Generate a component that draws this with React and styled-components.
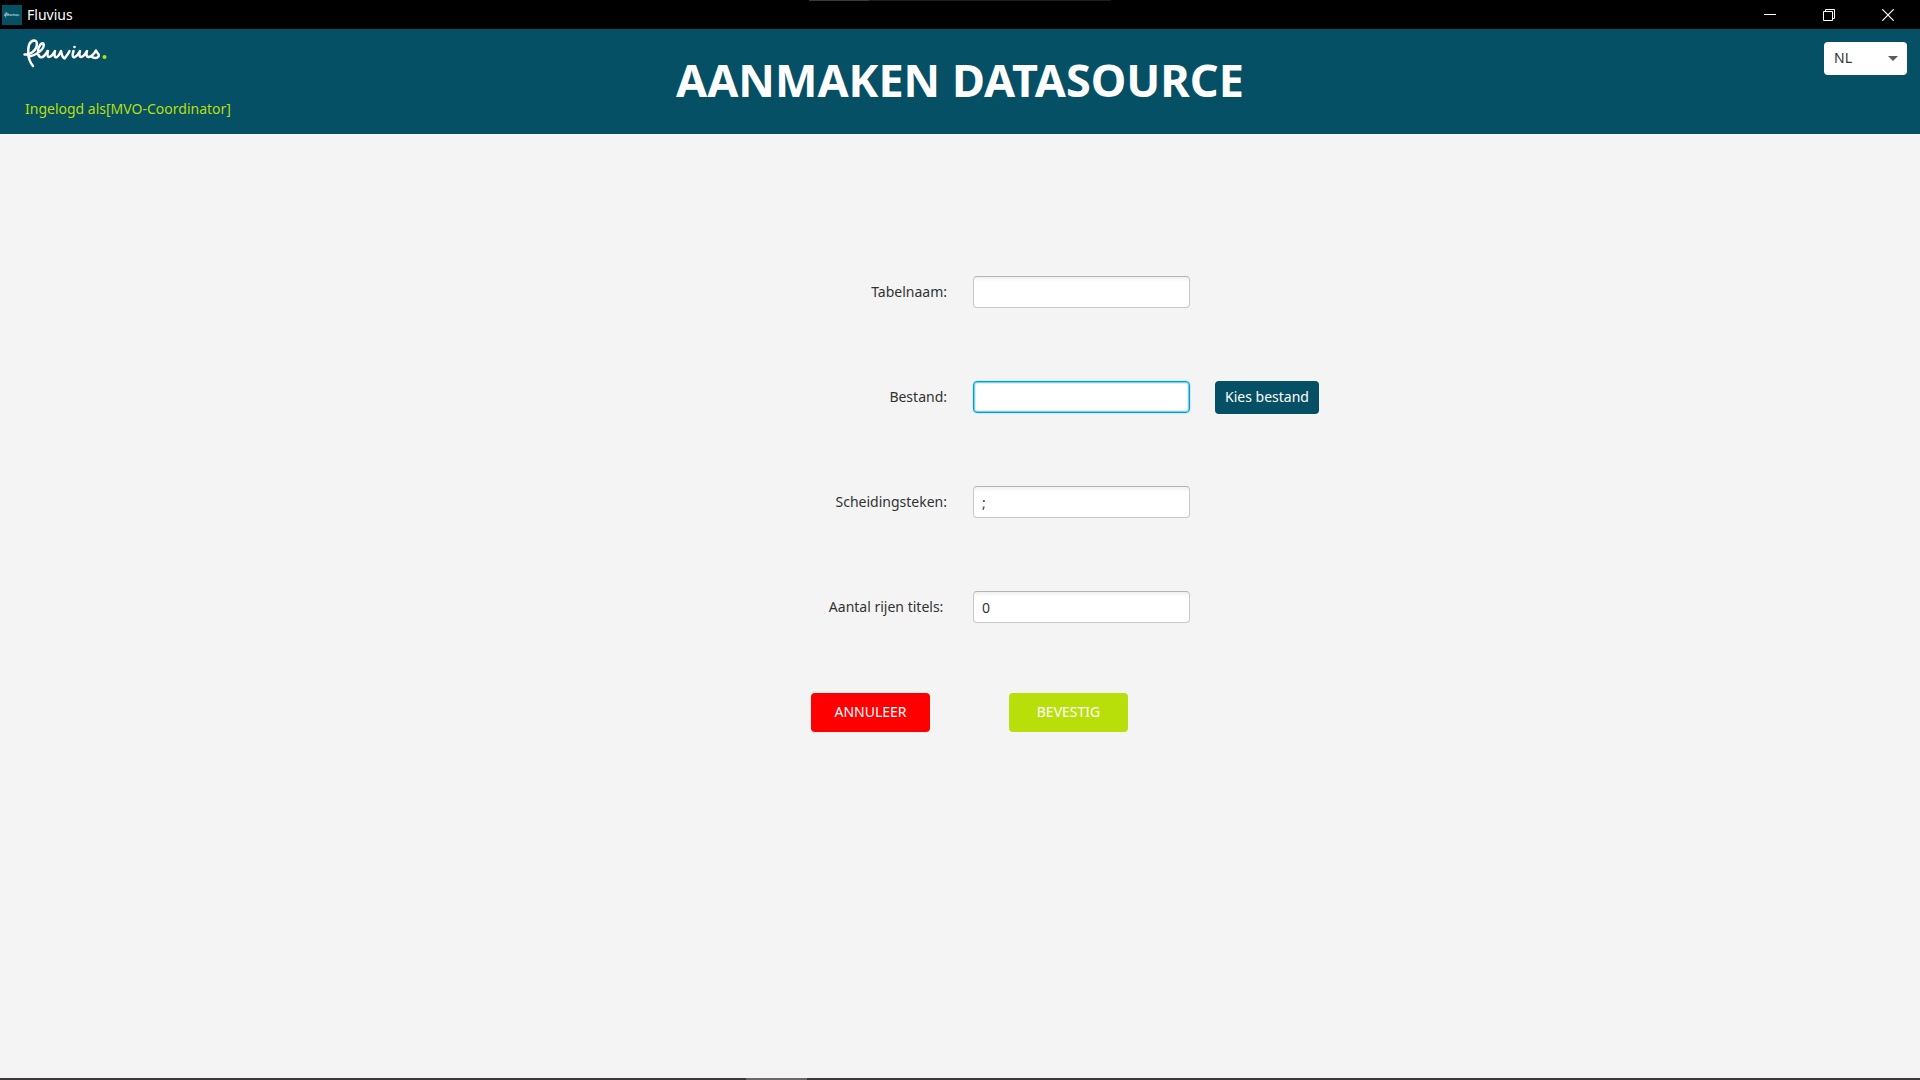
import React, { useState } from "react";
import styled, { createGlobalStyle, css } from "styled-components";

const teal = "#055064";
const lime = "#b9df0b";

const GlobalStyle = createGlobalStyle`
  *, *::before, *::after { box-sizing: border-box; }
  body {
    margin: 0;
    background: #f4f4f4;
    color: #323232;
    font: 14px/20px "Noto Sans", "Open Sans", sans-serif;
  }
  button, input, select { font: inherit; color: inherit; }
`;

const Window = styled.div`
  display: flex;
  flex-direction: column;
  min-height: 100vh;
`;

const TitleBar = styled.div`
  position: relative;
  display: flex;
  align-items: center;
  justify-content: space-between;
  height: 29px;
  padding: 0 3px 0 2px;
  background: #000;
  color: #fff;
`;

const TopSliver = styled.div`
  position: absolute;
  top: 0;
  left: 50%;
  width: 302px;
  height: 1px;
  margin-left: -151px;
  background: linear-gradient(to right, #3c3c3c 60px, #1e1e1e 60px);
`;

const AppName = styled.div`
  display: flex;
  align-items: center;
  gap: 5px;
`;

const AppIcon = styled.span`
  display: flex;
  align-items: center;
  justify-content: center;
  width: 20px;
  height: 20px;
  background: ${teal};
`;

const WindowControls = styled.div`
  display: flex;
`;

const ControlButton = styled.button`
  display: flex;
  align-items: center;
  justify-content: center;
  width: 59px;
  height: 28px;
  padding: 0;
  border: 0;
  background: transparent;
`;

const Header = styled.header`
  display: grid;
  grid-template-columns: 1fr auto 1fr;
  height: 105px;
  padding: 0 13px;
  background: ${teal};
`;

const Brand = styled.div`
  display: flex;
  flex-direction: column;
  justify-content: space-between;
  align-items: flex-start;
  padding: 10px 0 15px 10px;
`;

const LoggedIn = styled.span`
  padding-left: 2px;
  color: ${lime};
`;

const Title = styled.h1`
  align-self: center;
  margin: 0 0 4px;
  color: #fff;
  font-size: 45px;
  line-height: 60px;
  font-weight: 700;
`;

const LanguagePicker = styled.label`
  position: relative;
  justify-self: end;
  align-self: start;
  margin-top: 13px;
`;

const LanguageSelect = styled.select`
  appearance: none;
  display: block;
  width: 83px;
  height: 33px;
  padding: 0 10px 2px;
  border: 0;
  border-radius: 4px;
  background: #fff;
`;

const Arrow = styled.svg`
  position: absolute;
  right: 9px;
  top: 14px;
  pointer-events: none;
`;

const Main = styled.main`
  flex: 1;
  padding-top: 142px;
`;

const Form = styled.form`
  width: fit-content;
  margin: 0 auto;
  padding-left: 210px;
`;

const Fields = styled.div`
  display: grid;
  grid-template-columns: 137px 217px 104px;
  grid-auto-rows: 33px;
  column-gap: 25px;
  row-gap: 72px;
`;

const FieldLabel = styled.label`
  grid-column: 1;
  justify-self: end;
  align-self: center;
  padding: 0 1px 2px 0;
  white-space: pre;
`;

const TextField = styled.input`
  grid-column: 2;
  width: 100%;
  height: 32px;
  padding: 0 8px;
  border: 1px solid #c8c8c8;
  border-top-color: #b4b4b4;
  border-radius: 4px;
  outline: 0;
  background: linear-gradient(#f0f0f0, #fff 5px);
  ${(p) =>
    p.$active &&
    css`
      border-color: #039ed3;
      background: #fff;
      box-shadow: 0 0 0 1px #cfe9f2, inset 0 0 0 1px #7fcce6, inset 0 0 0 2px #dcf1f8;
    `}
`;

const Button = styled.button`
  width: ${(p) => p.$width};
  height: ${(p) => p.$height};
  padding: 0 0 2px;
  border: 0;
  border-radius: 4px;
  background: ${(p) => p.$color};
  color: #fff;
`;

const Actions = styled.div`
  display: flex;
  gap: 79px;
  margin-top: 69px;
`;

const TaskbarEdge = styled.div`
  height: 2px;
  background: linear-gradient(to right, #3a3838 746px, #6a6868 746px, #6a6868 807px, #3a3838 807px);
`;

function Wordmark({ width, height }) {
  return (
    <svg width={width} height={height} viewBox="0 0 84 30" fill="none" aria-hidden="true">
      <g stroke="#fff" strokeWidth="2.5" strokeLinecap="round" strokeLinejoin="round">
        <path d="M1.5 15.5C6 16 12 13 13.500 7.500C14.500 3.500 13.500 1.600 11 1.600C7 2 5 7 5.200 14C5.400 20 7.500 24 10 27" />
        <path d="M6 17.500C14 16 21.500 10 20.700 5.500C20 2 15.500 6 15 12C14.700 18.500 18.500 19.500 21 17C23 15 24 13 24.500 12" />
        <path d="M25 12C23.500 17 25 19 27.500 17.500C30 16 31 13.500 32 12C31 16 31.500 19 34 18C36 17 37 14 38 12C38.500 15 39.500 18.500 41.500 19.500C43.500 17 45.500 14.500 46.500 12" />
        <path d="M50.500 12C49 16.500 49.500 19 52 18C55 16.500 56 14 57 12C55.500 17 57 19 59.500 17.500C62 16 63 13.500 64 12C63 16 63.500 18.500 66 18C70 17 71.500 14 73 11.500C73.500 14 77 15 75.500 17.500C74 19.500 70.500 19 69 18" />
      </g>
      <circle cx="51.500" cy="8" r="1.300" fill="#fff" />
      <circle cx="81.500" cy="18" r="2" fill={lime} />
    </svg>
  );
}

function MinimizeIcon() {
  return (
    <svg width="12" height="12" aria-hidden="true">
      <path d="M0 5.500H12" stroke="#fff" />
    </svg>
  );
}

function RestoreIcon() {
  return (
    <svg width="12" height="12" fill="none" stroke="#fff" aria-hidden="true">
      <path d="M0.500 2.500H9.500V11.500H0.500ZM2.500 2.500V0.500H11.500V9.500H9.500" />
    </svg>
  );
}

function CloseIcon() {
  return (
    <svg width="12" height="12" stroke="#fff" strokeWidth="1.200" aria-hidden="true">
      <path d="M0.300 0.300L11.700 11.700M11.700 0.300L0.300 11.700" />
    </svg>
  );
}

export default function App() {
  const [values, setValues] = useState({ table: "", file: "", separator: ";", rows: "0" });
  const bind = (key) => ({
    id: key,
    value: values[key],
    onChange: (e) => setValues({ ...values, [key]: e.target.value }),
  });

  return (
    <>
      <GlobalStyle />
      <Window>
        <TitleBar>
          <TopSliver />
          <AppName>
            <AppIcon>
              <Wordmark width="16" height="6" />
            </AppIcon>
            <span>Fluvius</span>
          </AppName>
          <WindowControls>
            <ControlButton type="button" aria-label="Minimaliseren"><MinimizeIcon /></ControlButton>
            <ControlButton type="button" aria-label="Herstellen"><RestoreIcon /></ControlButton>
            <ControlButton type="button" aria-label="Sluiten"><CloseIcon /></ControlButton>
          </WindowControls>
        </TitleBar>

        <Header>
          <Brand>
            <Wordmark width="84" height="30" />
            <LoggedIn>Ingelogd als[MVO-Coordinator]</LoggedIn>
          </Brand>
          <Title>AANMAKEN DATASOURCE</Title>
          <LanguagePicker>
            <LanguageSelect aria-label="Taal" defaultValue="NL">
              <option>NL</option>
            </LanguageSelect>
            <Arrow width="10" height="5" aria-hidden="true">
              <path d="M0 0H10L5 5Z" fill="#5a5a5a" />
            </Arrow>
          </LanguagePicker>
        </Header>

        <Main>
          <Form onSubmit={(e) => e.preventDefault()}>
            <Fields>
              <FieldLabel htmlFor="table">Tabelnaam:</FieldLabel>
              <TextField {...bind("table")} />
              <FieldLabel htmlFor="file">Bestand:</FieldLabel>
              <TextField $active {...bind("file")} />
              <Button type="button" $width="104px" $height="33px" $color={teal}>Kies bestand</Button>
              <FieldLabel htmlFor="separator">Scheidingsteken:</FieldLabel>
              <TextField {...bind("separator")} />
              <FieldLabel htmlFor="rows">{"Aantal rijen titels: "}</FieldLabel>
              <TextField {...bind("rows")} />
            </Fields>
            <Actions>
              <Button type="button" $width="119px" $height="39px" $color="#ff0000">ANNULEER</Button>
              <Button type="submit" $width="119px" $height="39px" $color={lime}>BEVESTIG</Button>
            </Actions>
          </Form>
        </Main>
        <TaskbarEdge />
      </Window>
    </>
  );
}
